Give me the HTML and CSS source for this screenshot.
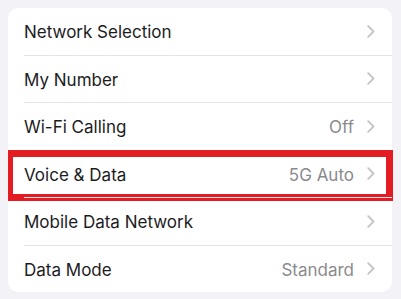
FILE: index.html
```html
<!DOCTYPE html>
<html lang="en">
  <head>
    <meta charset="UTF-8" />
    <title>Mobile Service</title>
    <link rel="stylesheet" href="styles.css">
  </head>
  <body>
    <div class="card">
      <div class="row">
        <span class="label">Network Selection</span>
        <svg class="chevron" viewBox="0 0 8 13"><path d="M1.2 1.2 L6.5 6.5 L1.2 11.8" /></svg>
      </div>
      <div class="row">
        <span class="label">My Number</span>
        <svg class="chevron" viewBox="0 0 8 13"><path d="M1.2 1.2 L6.5 6.5 L1.2 11.8" /></svg>
      </div>
      <div class="row">
        <span class="label">Wi-Fi Calling</span>
        <span class="value">Off</span>
        <svg class="chevron" viewBox="0 0 8 13"><path d="M1.2 1.2 L6.5 6.5 L1.2 11.8" /></svg>
      </div>
      <div class="row highlighted">
        <span class="label">Voice &amp; Data</span>
        <span class="value">5G Auto</span>
        <svg class="chevron" viewBox="0 0 8 13"><path d="M1.2 1.2 L6.5 6.5 L1.2 11.8" /></svg>
        <div class="mark"></div>
      </div>
      <div class="row">
        <span class="label">Mobile Data Network</span>
        <svg class="chevron" viewBox="0 0 8 13"><path d="M1.2 1.2 L6.5 6.5 L1.2 11.8" /></svg>
      </div>
      <div class="row">
        <span class="label">Data Mode</span>
        <span class="value">Standard</span>
        <svg class="chevron" viewBox="0 0 8 13"><path d="M1.2 1.2 L6.5 6.5 L1.2 11.8" /></svg>
      </div>
    </div>
  </body>
</html>
```

FILE: styles.css
```css
body {
  margin: 8px;
  background: #f2f2f7;
  font-family: Inter, "Noto Sans", sans-serif;
}
.card {
  width: 384px;
  background: white;
  border-radius: 10px;
}
.row {
  position: relative;
  display: flex;
  align-items: center;
  height: 46.5px;
  margin-left: 16px;
  padding-right: 17px;
  border-top: 1px solid #e3e3e8;
}
.row:first-child {
  border-top: none;
}
.label {
  flex: 1;
  font-size: 17px;
  color: #1c1c1e;
  padding-top: 2px;
}
.value {
  font-size: 17px;
  color: #8a8a8e;
  margin-right: 13px;
  padding-top: 2px;
}
.chevron {
  width: 8px;
  height: 13px;
  fill: none;
  stroke: #c4c4c7;
  stroke-width: 1.8;
  stroke-linecap: round;
  stroke-linejoin: round;
}
.mark {
  position: absolute;
  left: -18px;
  right: -1px;
  top: -1px;
  height: 37px;
  border: 7px solid #e31b23;
}
```
